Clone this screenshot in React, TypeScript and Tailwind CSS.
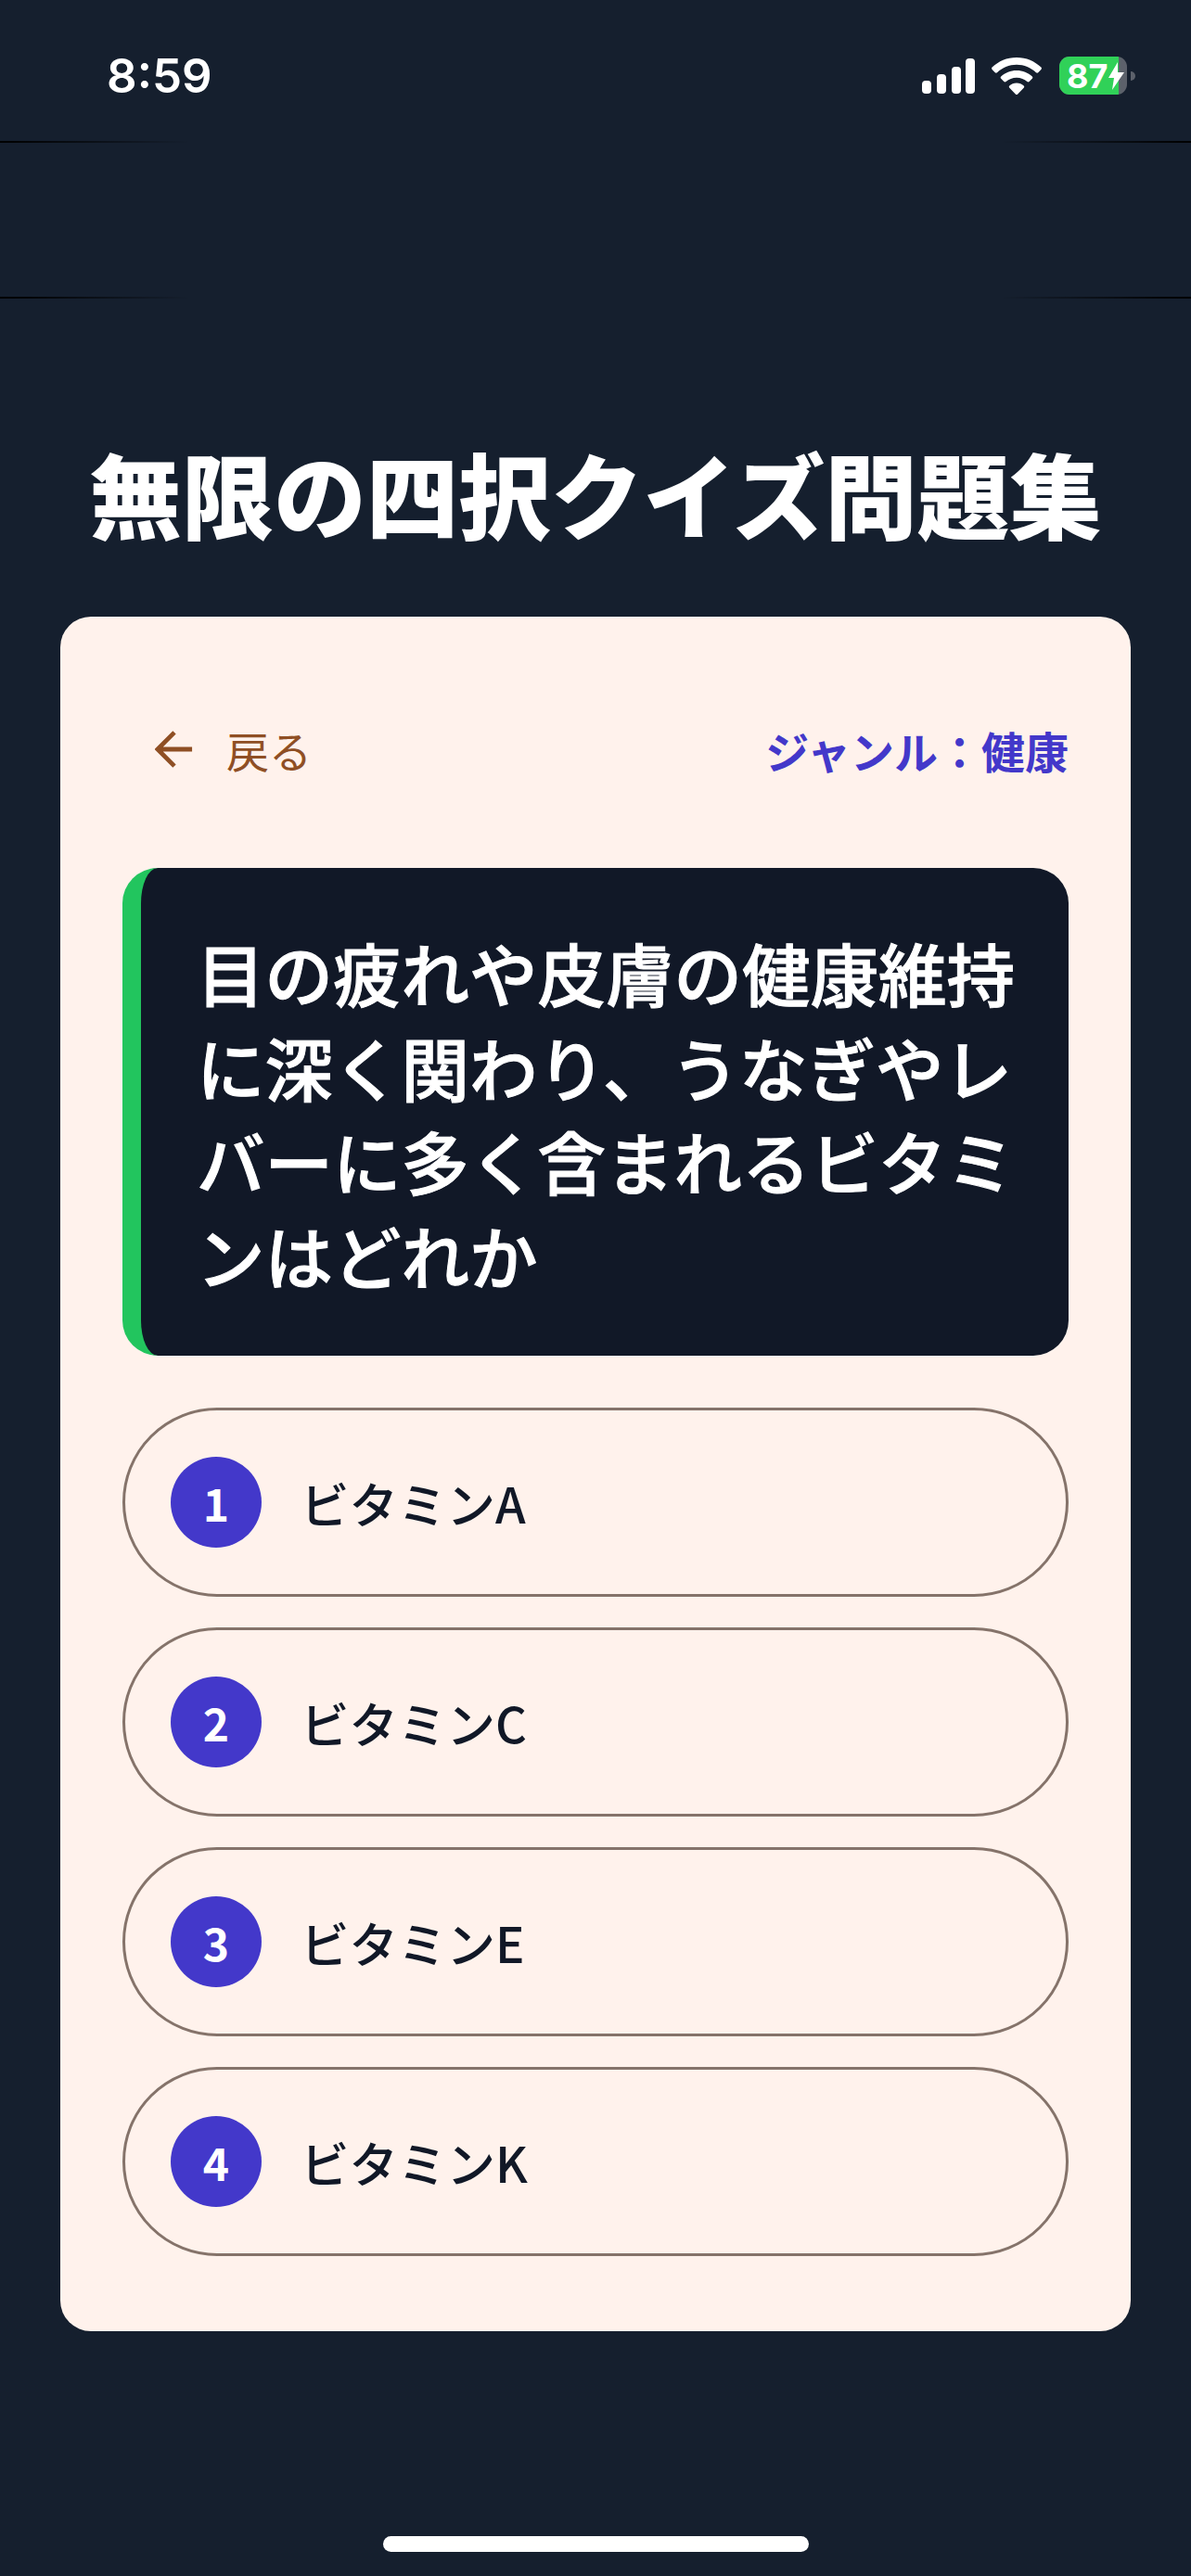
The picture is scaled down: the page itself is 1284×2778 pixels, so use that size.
const jp = { fontFamily: '"Noto Sans CJK JP", "Noto Sans", sans-serif' };

const options = [
  { n: 1, label: "ビタミンA" },
  { n: 2, label: "ビタミンC" },
  { n: 3, label: "ビタミンE" },
  { n: 4, label: "ビタミンK" },
];

function FadedLine() {
  return <div className="h-[2px] bg-[linear-gradient(to_right,#000,transparent_16%,transparent_84%,#000)]" />;
}

function StatusIcons() {
  return (
    <div className="flex items-center">
      <svg width="58" height="38" viewBox="0 0 58 38" fill="#fff">
        <rect x="0" y="24" width="10" height="14" rx="4" />
        <rect x="16" y="17" width="10" height="21" rx="4" />
        <rect x="32" y="9" width="10" height="29" rx="4" />
        <rect x="47" y="0" width="10" height="38" rx="4" />
      </svg>
      <svg className="ml-[17px]" width="54" height="40" viewBox="0 0 54 40" fill="#fff">
        <path d="M27 0C16.5 0 7.5 4 .6 10.6c-.7.7-.7 1.600 0 2.300l3.200 3.300c.6.600 1.500.6 2.200 0C11.600 11 18.900 7.800 27 7.800S42.400 11 48 16.200c.7.600 1.600.6 2.200 0l3.200-3.300c.7-.7.7-1.600 0-2.300C46.500 4 37.500 0 27 0z" />
        <path d="M27 14c-6.600 0-12.400 2.500-16.800 6.500-.7.700-.7 1.600 0 2.300l3.200 3.200c.6.600 1.500.7 2.200.1C18.600 23.400 22.600 21.800 27 21.800s8.400 1.600 11.400 4.300c.7.600 1.600.5 2.200-.1l3.200-3.200c.7-.7.7-1.600 0-2.300C39.400 16.500 33.600 14 27 14z" />
        <path d="M27 27.500c-3 0-5.700 1.100-7.700 2.900-.7.700-.7 1.600 0 2.300l6.500 6.700c.7.700 1.700.7 2.400 0l6.500-6.700c.7-.7.700-1.600 0-2.300-2-1.800-4.700-2.900-7.700-2.900z" />
      </svg>
      <div className="relative ml-[19px] flex h-[41px] w-[73px] overflow-hidden rounded-[11px] bg-[#5c616b]">
        <div className="flex w-[64px] items-center bg-[#30d158] pl-[8px] text-[36px] font-bold leading-none text-white" style={{ fontFamily: "Inter, sans-serif" }}>
          87
        </div>
        <svg className="absolute left-[53px] top-[6px]" width="17" height="30" viewBox="0 0 17 30" fill="#fff">
          <path d="M10 0 0 17h6l-2 13L17 11h-7z" />
        </svg>
      </div>
      <div className="ml-[4px] h-[10px] w-[5px] rounded-r-full bg-[#5c616b]" />
    </div>
  );
}

function Option({ n, label }: { n: number; label: string }) {
  return (
    <button className="flex h-[204px] w-full items-center rounded-[102px] border-[3px] border-[#85736a] pl-[49px] text-left">
      <span className="flex h-[98px] w-[98px] shrink-0 items-center justify-center rounded-full bg-[#4338ca] text-[48px] font-bold leading-none text-white">
        {n}
      </span>
      <span className="ml-[42px] text-[52.500px] font-medium leading-none text-[#111827]">{label}</span>
    </button>
  );
}

export default function App() {
  return (
    <div className="flex min-h-[2778px] flex-col bg-[#151f2e]" style={jp}>
      <div className="flex h-[152px] items-start justify-between pl-[115px] pr-[60px] pt-[56px]">
        <span className="text-[51px] font-semibold leading-[52px] text-white" style={{ fontFamily: "Inter, sans-serif" }}>8:59</span>
        <div className="pt-[5px]"><StatusIcons /></div>
      </div>
      <FadedLine />
      <div className="h-[166px]" />
      <FadedLine />

      <h1 className="mt-[141px] text-center text-[99.500px] font-black leading-[136px] text-white">無限の四択クイズ問題集</h1>

      <main className="mx-[65px] mt-[66px] h-[1849px] rounded-[33px] bg-[#fff2ec] px-[67px] pt-[94px]">
        <div className="flex h-[98px] items-center justify-between pl-[35px]">
          <button className="flex items-center text-[#8f4f24]">
            <svg width="42" height="42" viewBox="0 0 44 44" fill="none" stroke="currentColor" strokeWidth="5">
              <path d="M42 22H4M22 3 3 22l19 19" />
            </svg>
            <span className="ml-[35px] text-[46px] leading-none">戻る</span>
          </button>
          <span className="text-[47px] font-bold leading-none text-[#4338ca]">ジャンル：健康</span>
        </div>

        <section className="mt-[79px] h-[526px] rounded-[38px] border-l-[20px] border-[#22c55e] bg-[#111827] pl-[60px] pr-[48px] pt-[62px] text-[73.500px] font-medium leading-[101.500px] text-white [-webkit-text-stroke:1px_white]">
          目の疲れや皮膚の健康維持に深く関わり、うなぎやレバーに多く含まれるビタミンはどれか
        </section>

        <div className="mt-[56px] flex flex-col gap-[33px]">
          {options.map((o) => (
            <Option key={o.n} n={o.n} label={o.label} />
          ))}
        </div>
      </main>

      <div className="flex flex-1 items-end justify-center pb-[26px]">
        <div className="h-[17px] w-[459px] rounded-full bg-white" />
      </div>
    </div>
  );
}
